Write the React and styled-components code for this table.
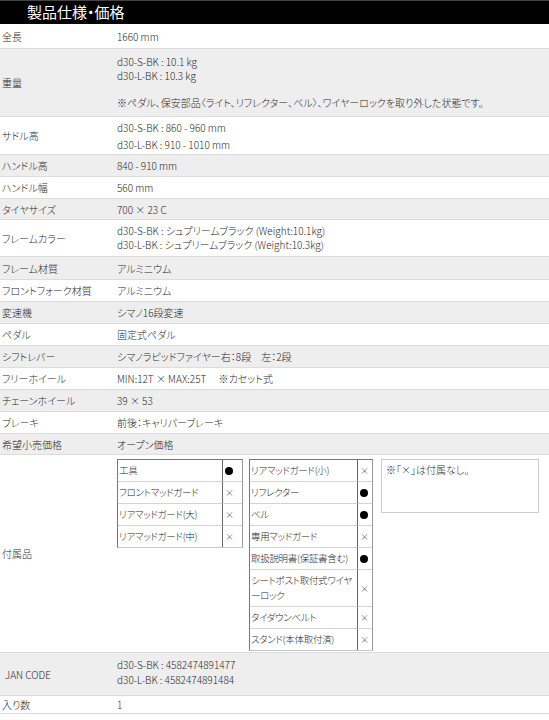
import React from 'react';
import styled, { createGlobalStyle } from 'styled-components';

const GlobalStyle = createGlobalStyle`
  body {
    margin: 0;
    background: #fff;
    font-family: "Noto Sans CJK JP", "Liberation Sans", sans-serif;
    font-feature-settings: "palt";
    color: #2a2a2a;
  }
`;

const specs = [
    { label: '全長', pad: '4px 2px 3px', lines: ['1660 mm'] },
    { label: '重量', pad: '6px 2px 7px', lh: 13.5, lines: ['d30-S-BK : 10.1 kg', 'd30-L-BK : 10.3 kg', '', '※ペダル、保安部品〈ライト、リフレクター、ベル〉、ワイヤーロックを取り外した状態です。'] },
    { label: 'サドル高', pad: '2px 2px 1px', lines: ['d30-S-BK : 860 - 960 mm', 'd30-L-BK : 910 - 1010 mm'] },
    { label: 'ハンドル高', lines: ['840 - 910 mm'] },
    { label: 'ハンドル幅', lines: ['560 mm'] },
    { label: 'タイヤサイズ', pad: '2px 2px 1px', lines: ['700 × 23 C'] },
    { label: 'フレームカラー', pad: '4px 2px', lh: 14, lines: ['d30-S-BK : シュプリームブラック (Weight:10.1kg)', 'd30-L-BK : シュプリームブラック (Weight:10.3kg)'] },
    { label: 'フレーム材質', pad: '3px 2px 2px', lines: ['アルミニウム'] },
    { label: 'フロントフォーク材質', lines: ['アルミニウム'] },
    { label: '変速機', lines: ['シマノ16段変速'] },
    { label: 'ペダル', lines: ['固定式ペダル'] },
    { label: 'シフトレバー', lines: ['シマノラピッドファイヤー右：8段　左：2段'] },
    { label: 'フリーホイール', lines: ['MIN:12T × MAX:25T　 ※カセット式'] },
    { label: 'チェーンホイール', lines: ['39 × 53'] },
    { label: 'ブレーキ', lines: ['前後：キャリパーブレーキ'] },
    { label: '希望小売価格', pad: '2px 2px 1px', lines: ['オープン価格'] },
];

const accessoriesA = [
    ['工具', true],
    ['フロントマッドガード', false],
    ['リアマッドガード(大)', false],
    ['リアマッドガード(中)', false],
];

const accessoriesB = [
    ['リアマッドガード(小)', false],
    ['リフレクター', true],
    ['ベル', true],
    ['専用マッドガード', false],
    ['取扱説明書(保証書含む)', true],
    ['シートポスト取付式ワイヤ\nーロック', false],
    ['タイダウンベルト', false],
    ['スタンド(本体取付済)', false],
];

const Mark = ({ on }) => (on ? <Dot /> : <Cross>×</Cross>);

const PartsTable = ({ items, nameWidth, markWidth }) => (
    <InnerTable>
        <colgroup>
            <col style={{ width: nameWidth }} />
            <col style={{ width: markWidth }} />
        </colgroup>
        <tbody>
            {items.map(([name, on]) => (
                <tr key={name}>
                    <PartName>{name}</PartName>
                    <PartMark><Mark on={on} /></PartMark>
                </tr>
            ))}
        </tbody>
    </InnerTable>
);

const App = () => {
    return (
        <Page>
            <GlobalStyle />
            <Heading>製品仕様・価格</Heading>
            <SpecTable>
                <colgroup>
                    <col style={{ width: 115 }} />
                    <col />
                </colgroup>
                <tbody>
                    {specs.map(({ label, pad, lh, lines }) => (
                        <Row key={label}>
                            <Label>{label}</Label>
                            <Value $pad={pad} $lh={lh}>
                                {lines.map((line, i) => (
                                    <Line key={i}>{line || '\u00a0'}</Line>
                                ))}
                            </Value>
                        </Row>
                    ))}
                    <Row>
                        <Label>付属品</Label>
                        <Value $pad="4px 2px 1px">
                            <Parts>
                                <PartsTable items={accessoriesA} nameWidth={104} markWidth={20} />
                                <PartsTable items={accessoriesB} nameWidth={107} markWidth={15} />
                                <Note>※「×」は付属なし。</Note>
                            </Parts>
                        </Value>
                    </Row>
                    <Row>
                        <Label $indent>JAN CODE</Label>
                        <Value $pad="4px 2px 8px" $lh={15}>
                            <Line>d30-S-BK : 4582474891477</Line>
                            <Line>d30-L-BK : 4582474891484</Line>
                        </Value>
                    </Row>
                    <Row>
                        <Label>入り数</Label>
                        <Value $pad="0 2px">
                            <Line>1</Line>
                        </Value>
                    </Row>
                </tbody>
            </SpecTable>
        </Page>
    );
};

const Page = styled.div`
    width: 549px;
    font-size: 10px;
    font-weight: 300;
`;

const Heading = styled.h2`
    margin: 0;
    height: 24px;
    box-sizing: border-box;
    border-top: 1px solid #444;
    background: #000;
    color: #fff;
    font-size: 15px;
    font-weight: normal;
    line-height: 22px;
    padding-left: 27px;
`;

const SpecTable = styled.table`
    width: 100%;
    table-layout: fixed;
    border-collapse: collapse;
    border-spacing: 0;
`;

const Row = styled.tr`
    border-bottom: 1px solid #dcdcdc;
    &:nth-child(even) {
        background: #eeeeee;
    }
`;

const Label = styled.th`
    padding: 0 0 0 ${(p) => (p.$indent ? '5px' : '2px')};
    text-align: left;
    font-weight: inherit;
    vertical-align: middle;
    white-space: nowrap;
`;

const Value = styled.td`
    padding: ${(p) => p.$pad || '2px 2px 2px'};
    line-height: ${(p) => (p.$lh ? `${p.$lh}px` : '17px')};
    vertical-align: middle;
`;

const Line = styled.div`
    white-space: nowrap;
`;

const Parts = styled.div`
    display: flex;
    align-items: flex-start;
    gap: 6px;
`;

const InnerTable = styled.table`
    table-layout: fixed;
    border-collapse: separate;
    border-spacing: 0;
    border: 1px solid #777;
    border-bottom-color: #c8c8c8;
    border-right-color: #999;
    line-height: 15px;
    font-size: 9.5px;
`;

const PartName = styled.td`
    padding: 3px 0 3px 1px;
    border-bottom: 1px solid #d4d4d4;
    white-space: pre-line;
    letter-spacing: -0.3px;
    overflow: hidden;
    tr:last-child & {
        border-bottom: none;
    }
`;

const PartMark = styled.td`
    padding: 3px 0 3px 2px;
    border-left: 1px solid #666;
    border-bottom: 1px solid #d4d4d4;
    tr:last-child & {
        border-bottom: none;
    }
`;

const Dot = styled.span`
    display: inline-block;
    width: 8px;
    height: 8px;
    border-radius: 50%;
    background: #000;
    vertical-align: middle;
`;

const Cross = styled.span`
    color: #555;
    font-size: 9px;
`;

const Note = styled.div`
    margin-left: 2px;
    width: 158px;
    height: 54px;
    box-sizing: border-box;
    border: 1px solid #ccc;
    padding: 2px 4px;
    line-height: 15px;
`;

export default App;
